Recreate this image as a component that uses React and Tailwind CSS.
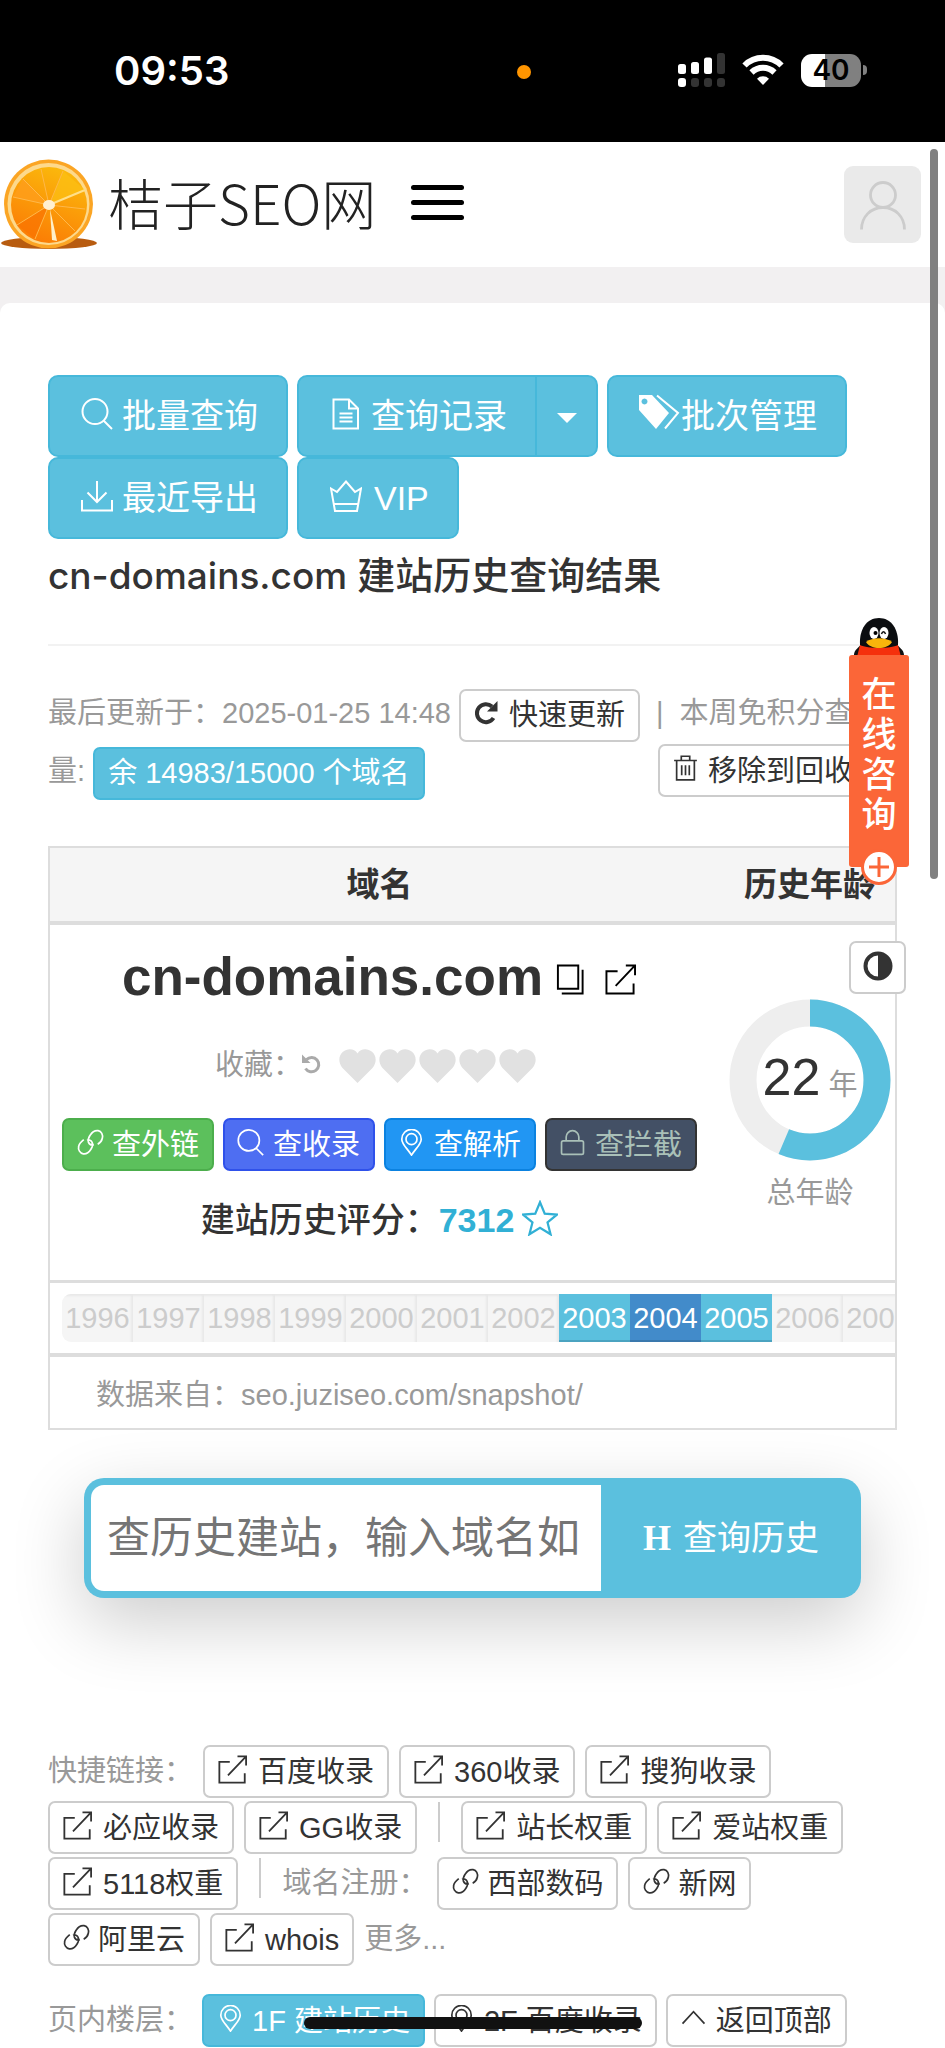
import { clsx } from 'clsx'

const years = Array.from({ length: 12 }, (_, i) => 1996 + i)

const quickLinks = [
  { label: '百度收录', icon: 'external' },
  { label: '360收录', icon: 'external' },
  { label: '搜狗收录', icon: 'external' },
  { label: '必应收录', icon: 'external' },
  { label: 'GG收录', icon: 'external' },
  { divider: true },
  { label: '站长权重', icon: 'external' },
  { label: '爱站权重', icon: 'external' },
  { label: '5118权重', icon: 'external' },
  { divider: true },
  { text: '域名注册：' },
  { label: '西部数码', icon: 'link' },
  { label: '新网', icon: 'link' },
  { label: '阿里云', icon: 'link' },
  { label: 'whois', icon: 'external' },
]

// thin line icons, all drawn on a 32px grid
const shapes = {
  search: <><circle cx="14" cy="13.500" r="12.500" /><path d="M22.500 22.500 31 31" /></>,
  doc: <><path d="M3.500 1.500H19l9 9V30.500H3.500z" /><path d="M19 1.500v9h9M9.500 15.500h13M9.500 19.500h13M9.500 23.500h13" /></>,
  download: <path d="M16 1v21M6.500 12.500 16 22l9.500-9.500M1 20v10.500h30V20" />,
  crown: <path d="M1 8.500 7 12l9-10.500L25 12l6-3.500L27 31H5zM4.500 24h23" />,
  external: <path d="M13 7.500H1.500V30.500h28V20M11 22.500 31 1.500M21.500 1.500H31v10" />,
  copy: <><path d="M3 1.500h21v24H3z" /><path d="M7 30.500h21.500V6" /></>,
  link: <path d="M12 13.500c2-1.500 5 0 6 2.500 1.200 3 .5 5-1.500 8-2.500 4-5 6-9 5.500-4-.8-6.500-5-5.500-9C2.500 17.500 5 15 8 12.500M20 18.500c-3 1-5.500-.5-6.500-3-.8-3 0-5 2-8 2.500-4 5.500-6 9.500-5.500 4 .8 6 5 5 9-.6 3-2.500 5.500-5.500 7" />,
  pin: <><path d="M16 31C11 23 4.500 18 4.500 12a11.500 11.500 0 0 1 23 0C27.500 18 21 23 16 31z" /><circle cx="16" cy="12" r="6.500" /></>,
  lock: <><rect x="3" y="14" width="26" height="16" rx="2" /><path d="M8.500 14V9.500a7.500 7.500 0 0 1 15 0V14" /></>,
  trash: <><path d="M2.500 6.500h27M11 6V1.500h10V6M5.500 6.500v23h21v-23" /><path d="M11.500 12v12M16 12v12M20.500 12v12" /></>,
  up: <path d="M3 22 16 8l13 14" />,
  star: <path d="m16 2 4.200 10.200L31 13l-8.300 7 2.700 10.500L16 24.800 6.600 30.500 9.300 20 1 13l10.800-.8z" />,
}

function Icon({ name, className, stroke = 2 }) {
  return (
    <svg viewBox="0 0 32 32" className={clsx('shrink-0', className)} fill="none" stroke="currentColor" strokeWidth={stroke} aria-hidden="true">
      {shapes[name]}
    </svg>
  )
}

const tones = {
  plain: 'bg-white border-[#ccc] text-[#333]',
  info: 'bg-[#5bc0de] border-[#46b8da] text-white',
  green: 'bg-[#5cc05c] border-[#4cae4c] text-white',
  indigo: 'bg-[#4e6ef2] border-[#2f51ea] text-white',
  blue: 'bg-[#2196f3] border-[#0b82e0] text-white',
  dark: 'bg-[#435065] border-[#333] text-[#a9c0b8]',
}

function SmallButton({ as: Tag = 'button', tone = 'plain', icon, children, className, ...rest }) {
  return (
    <Tag
      className={clsx('inline-flex items-center h-[53px] px-[13px] border-2 rounded-[7px] text-[29px] leading-[40px] whitespace-nowrap', tones[tone], className)}
      {...rest}
    >
      {icon && (
        <span className={clsx('flex mr-[9px] pb-1', icon === 'external' ? 'w-[31px] justify-start' : 'w-[26px] justify-center')}>
          <Icon name={icon} className={icon === 'external' ? 'w-[29px] h-[29px]' : 'w-[27px] h-[27px]'} />
        </span>
      )}
      {children}
    </Tag>
  )
}

function BigButton({ icon, children, className }) {
  return (
    <button className={clsx('inline-flex items-center h-[82px] px-[28px] border-2 border-[#46b8da] bg-[#5bc0de] text-white text-[34px] rounded-[10px] whitespace-nowrap', className)}>
      {icon && <Icon name={icon} className={clsx('w-[32px] h-[32px] ml-[3px] mb-1', icon === 'crown' ? 'mr-3' : 'mr-[9px]')} />}
      {children}
    </button>
  )
}

function StatusBar() {
  return (
    <div className="relative h-[142px] bg-black text-white flex justify-between items-start pl-[114px] pr-[78px]">
      <div className="font-['Inter',sans-serif] font-semibold text-[40px] leading-[52px] mt-[45px]">09:53</div>
      <span className="absolute left-[517px] top-[65px] w-[14px] h-[14px] rounded-full bg-[#ff9500]" />
      <div className="flex items-center mt-[53px] h-[34px]">
        <svg viewBox="0 0 48 34" className="w-[48px] h-[34px]" fill="#fff">
          <rect y="11" width="8" height="10" rx="2.500" />
          <rect x="13" y="9" width="8" height="12" rx="2.500" />
          <rect x="26" y="4.500" width="8" height="16.500" rx="2.500" />
          <rect x="39" y="0" width="8" height="21" rx="2.500" fill="#333" />
          <rect y="25" width="8" height="9" rx="3" />
          <rect x="13" y="25" width="8" height="9" rx="3" fill="#333" />
          <rect x="26" y="25" width="8" height="9" rx="3" fill="#333" />
          <rect x="39" y="25" width="8" height="9" rx="3" fill="#333" />
        </svg>
        <svg viewBox="0 0 42 32" className="w-[42px] h-[32px] ml-4" fill="none" stroke="#fff" strokeWidth="6">
          <path d="M2.500 11.500a26 26 0 0 1 37 0M9.500 18.500a16.500 16.500 0 0 1 23 0" />
          <path d="M21 31l-6-6.200a8.500 8.500 0 0 1 12 0z" fill="#fff" stroke="none" />
        </svg>
        <div className="flex items-center ml-[17px]">
          <div className="w-[60px] h-[33px] rounded-[11px] bg-linear-to-r from-white from-40% to-[#808080] to-40% text-black text-center font-['Inter',sans-serif] font-semibold text-[28px] leading-[33px]">40</div>
          <span className="ml-[2px] w-1 h-[10px] rounded-r-full bg-[#808080]" />
        </div>
      </div>
    </div>
  )
}

function OrangeLogo() {
  return (
    <svg viewBox="0 0 96 92" className="w-[96px] h-[92px]" aria-hidden="true">
      <defs>
        <linearGradient id="pulp" x1="0.700" y1="0" x2="0.300" y2="1">
          <stop offset="0" stopColor="#fbba0c" />
          <stop offset="1" stopColor="#fb7b05" />
        </linearGradient>
      </defs>
      <ellipse cx="48" cy="84" rx="48" ry="6" fill="#b85c10" />
      <circle cx="47.500" cy="45" r="44.500" fill="#fba524" />
      <circle cx="47.500" cy="45" r="41" fill="#fdd98c" />
      <circle cx="48" cy="46" r="38" fill="url(#pulp)" />
      <path d="M48 46 12 38 22 20z" fill="#ff9d1c" opacity="0.800" />
      <path d="M48 46 16 66 34 80z" fill="#f97402" opacity="0.700" />
      <path d="M48 46 62 12 84 31z" fill="#fcc014" opacity="0.700" />
      <g stroke="#ffb84a" strokeWidth="1">
        <path d="M48 46 40 10M48 46 22 20M48 46 12 38M48 46 16 66M48 46 34 80M48 46 74 72M48 46 84 50M48 46 62 12" />
        <path d="M48 46 84 31" stroke="#ffdf8a" strokeWidth="2" />
      </g>
      <path d="m49 50 7 32-5-1z" fill="#fff0c8" />
      <ellipse cx="48" cy="46" rx="6" ry="5" fill="#fff0d0" />
    </svg>
  )
}

function Header() {
  return (
    <header className="flex items-center h-[125px] bg-white pl-[1px] pr-6">
      <a href="#" className="flex items-center">
        <OrangeLogo />
        <span className="ml-[11px] mb-2 font-['Noto_Sans_CJK_SC',sans-serif] font-light text-[55px] leading-[70px] text-[#222] whitespace-nowrap">桔子SEO网</span>
      </a>
      <button aria-label="菜单" className="ml-[35px] mb-1 flex flex-col gap-[10px]">
        <span className="w-[53px] h-[5px] rounded-full bg-black" />
        <span className="w-[53px] h-[5px] rounded-full bg-black" />
        <span className="w-[53px] h-[5px] rounded-full bg-black" />
      </button>
      <button aria-label="用户" className="ml-auto w-[77px] h-[77px] rounded-[9px] bg-[#eaeaea] flex items-center justify-center">
        <svg viewBox="0 0 48 50" className="w-[48px] h-[50px]" fill="none" stroke="#ccc" strokeWidth="2.800">
          <circle cx="24" cy="15" r="12.500" />
          <path d="M2.500 49.500c0-13 9.500-22 21.500-22s21.500 9 21.500 22" />
        </svg>
      </button>
    </header>
  )
}

function AgeRing() {
  const length = 2 * Math.PI * 67
  return (
    <div className="relative w-[162px] h-[162px] mx-auto">
      <svg viewBox="0 0 162 162" className="w-full h-full -rotate-90" fill="none" strokeWidth="27">
        <circle cx="81" cy="81" r="67" stroke="#eee" />
        <circle cx="81" cy="81" r="67" stroke="#5bc0de" strokeDasharray={`${length * 0.563} ${length}`} />
      </svg>
      <div className="absolute inset-0 flex items-baseline justify-center pt-[46px] whitespace-nowrap">
        <span className="text-[52px] leading-[64px] text-[#333]">22</span>
        <span className="text-[29px] text-[#999] ml-2">年</span>
      </div>
    </div>
  )
}

function ResultTable() {
  return (
    <div className="mt-[46px] border-2 border-[#ddd] overflow-hidden">
      <table className="table-fixed w-[861px] border-separate border-spacing-0 text-[#333]">
        <thead>
          <tr className="bg-[#f5f5f5]">
            <th className="w-[659px] h-[77px] border-b-4 border-[#ddd] text-[33px] font-bold">域名</th>
            <th className="border-b-4 border-[#ddd] text-[33px] font-bold">历史年龄</th>
          </tr>
        </thead>
        <tbody>
          <tr>
            <td className="h-[358px] border-b-[3px] border-[#ddd] align-top px-3 pt-5">
              <div className="flex items-baseline justify-center">
                <strong className="text-[53px] leading-[64px]">cn-domains.com</strong>
                <button aria-label="复制" className="ml-3 text-black"><Icon name="copy" className="w-[31px] h-[31px]" /></button>
                <a href="#" aria-label="打开" className="ml-[18px] text-black"><Icon name="external" className="w-[33px] h-[31px]" /></a>
              </div>
              <div className="mt-[37px] pr-2 flex items-center justify-center h-10 text-[29px] text-[#999]">
                收藏：
                <svg viewBox="0 0 20 20" className="w-[20px] h-[20px] mb-1" fill="none" stroke="#aaa" strokeWidth="3">
                  <path d="M4.500 5.500A7.200 7.200 0 1 1 3.500 14.500" />
                  <path d="M0 .5v8.500h8.500z" fill="#aaa" stroke="none" />
                </svg>
                <div className="flex ml-[17px] gap-[3px]">
                  {[1, 2, 3, 4, 5].map((n) => (
                    <button key={n} aria-label={`收藏 ${n}`}>
                      <svg viewBox="0 0 37 34" className="w-[37px] h-[34px]" fill="#e1e1e1">
                        <path d="M18.500 34 3.500 19C-1.500 13 0 6 4 2.800 8.500-1 15.500-.5 18.500 4.500 21.500-.5 28.500-1 33 2.800c4 3.200 5.500 10.200.5 16.200z" />
                      </svg>
                    </button>
                  ))}
                </div>
              </div>
              <div className="mt-8 flex justify-between">
                <SmallButton tone="green" icon="link">查外链</SmallButton>
                <SmallButton tone="indigo" icon="search">查收录</SmallButton>
                <SmallButton tone="blue" icon="pin">查解析</SmallButton>
                <SmallButton tone="dark" icon="lock">查拦截</SmallButton>
              </div>
              <div className="mt-6 flex items-center justify-center text-[34px] leading-[50px] font-medium">
                建站历史评分：
                <span className="text-[#31b0d5] font-bold">7312</span>
                <Icon name="star" stroke={2} className="w-[36px] h-[36px] ml-2 mb-1 text-[#31b0d5]" />
              </div>
            </td>
            <td className="border-b-[3px] border-[#ddd] align-top pt-[74px] text-center">
              <AgeRing />
              <div className="mt-3 text-[29px] leading-[40px] text-[#999]">总年龄</div>
            </td>
          </tr>
          <tr>
            <td colSpan={2} className="h-[74px] border-b-4 border-[#ddd] pl-3">
              <div className="flex h-12 rounded-l-[9px] bg-[#f5f5f5] text-[29px] leading-[48px] text-[#ccc] overflow-hidden">
                {years.map((year) => (
                  <span
                    key={year}
                    className={clsx(
                      'w-[71px] shrink-0 text-center',
                      year === 2004 && 'bg-[#428bca] text-white shadow-[inset_0_-2px_0_#3a78ad]',
                      (year === 2003 || year === 2005) && 'bg-[#5bc0de] text-white shadow-[inset_0_-2px_0_#4ba3c0]',
                      (year < 2003 || year > 2005) && 'shadow-[inset_-2px_2px_2px_#e8e8e8]'
                    )}
                  >
                    {year}
                  </span>
                ))}
              </div>
            </td>
          </tr>
          <tr>
            <td colSpan={2} className="h-[71px] pl-[46px] pt-1 text-[29px] leading-[40px] text-[#999]">数据来自：seo.juziseo.com/snapshot/</td>
          </tr>
        </tbody>
      </table>
    </div>
  )
}

function SearchForm() {
  return (
    <form className="mt-12 mx-9 h-[120px] flex p-[7px] pr-0 rounded-[20px] bg-[#5bc0de] shadow-[0_24px_72px_rgba(0,0,0,0.2)]">
      <input
        type="text"
        aria-label="域名"
        placeholder="查历史建站，输入域名如"
        className="flex-1 min-w-0 bg-white rounded-l-[13px] pl-4 text-[43px] placeholder:text-[#757575] outline-none"
      />
      <button type="button" className="w-[260px] flex items-center justify-center text-white text-[34px] whitespace-nowrap">
        <b className="font-['Liberation_Serif',serif] text-[36px] mr-3">H</b>
        查询历史
      </button>
    </form>
  )
}

function QuickLinks() {
  return (
    <nav className="mt-[147px] flex flex-wrap items-center gap-x-[10px] gap-y-[3px] text-[29px] text-[#999]">
      <span>快捷链接：</span>
      {quickLinks.map((item, i) => {
        if (item.divider) return <span key={i} className="w-[2px] h-10 mx-[11px] mb-3 bg-[#ccc]" />
        if (item.text) return <span key={i}>{item.text}</span>
        return <SmallButton key={i} as="a" href="#" icon={item.icon}>{item.label}</SmallButton>
      })}
      <span>更多...</span>
    </nav>
  )
}

function ChatWidget() {
  return (
    <a href="#" className="absolute left-[849px] top-[617px] w-[60px] flex flex-col items-center">
      <svg viewBox="0 0 60 40" className="w-[60px] h-[40px]" aria-hidden="true">
        <path d="M5 38c0-5 5-8 9-12h32c4 4 9 7 9 12z" fill="#111" />
        <path d="M11 28h38l3 12H8z" fill="#f5300c" />
        <path d="M11 28C10 12 18 1 30 1s20 11 19 27c-8 4-30 4-38 0z" fill="#0b0d10" />
        <ellipse cx="25" cy="16" rx="4.500" ry="6" fill="#fff" />
        <ellipse cx="35" cy="16" rx="4.500" ry="6" fill="#fff" />
        <circle cx="26.500" cy="16" r="2" />
        <path d="M32.500 17c1-3 3-3 4 0" stroke="#111" strokeWidth="1.500" fill="none" />
        <path d="M17 25c6-5 20-5 26 0-5 8-21 8-26 0z" fill="#f9b50b" />
      </svg>
      <span className="w-[60px] h-[212px] -mt-[2px] rounded-[3px] bg-[#fb6638] text-white text-[35px] leading-[40px] pt-5 flex flex-col items-center font-medium">
        <span>在</span>
        <span>线</span>
        <span>咨</span>
        <span>询</span>
      </span>
      <svg viewBox="0 0 38 38" className="w-[38px] h-[38px] -mt-[19px]" aria-hidden="true">
        <circle cx="19" cy="19" r="16.500" fill="#fff" stroke="#fb6638" strokeWidth="3" />
        <path d="M19 9v20M9 19h20" stroke="#fb6638" strokeWidth="3" />
      </svg>
    </a>
  )
}

export default function App() {
  return (
    <div className="relative min-h-screen overflow-hidden bg-white font-['Liberation_Sans','Noto_Sans_CJK_SC',sans-serif]">
      <StatusBar />
      <Header />
      <div className="bg-[#f2f0f1] pt-9">
        <main className="bg-white rounded-t-[10px] px-12 pt-[72px]">
          {/* Toolbar */}
          <div className="flex flex-wrap gap-x-[9px]">
            <BigButton icon="search">批量查询</BigButton>
            <div className="flex">
              <BigButton icon="doc" className="rounded-r-none">查询记录</BigButton>
              <button aria-label="更多记录" className="-ml-[2px] w-[63px] flex items-center justify-center border-2 border-[#46b8da] bg-[#5bc0de] rounded-r-[10px]">
                <svg viewBox="0 0 20 10" className="w-[20px] h-[10px] mt-1" fill="#fff"><path d="M0 0h20L10 10z" /></svg>
              </button>
            </div>
            <BigButton>
              <svg viewBox="0 0 44 36" className="w-[44px] h-[36px] mb-2" fill="#fff" aria-hidden="true">
                <path d="M2 1h13l17 18-13 16L2 16zM7.500 4.500a3 3 0 1 0 .01 0z" fillRule="evenodd" />
                <path d="M20 1.500 41 19 28 34.500" fill="none" stroke="#fff" strokeWidth="2" />
              </svg>
              批次管理
            </BigButton>
            <BigButton icon="download">最近导出</BigButton>
            <BigButton icon="crown">VIP</BigButton>
          </div>

          <h1 className="mt-[16px] text-[38px] leading-[40px] font-medium text-[#333] font-['Inter','Noto_Sans_CJK_SC',sans-serif]">
            <span className="text-[37px]">cn-domains.com</span> 建站历史查询结果
          </h1>
          <hr className="mt-[48px] border-t-2 border-[#f2f2f2]" />

          <div className="mt-[38px] text-[29px] leading-[58px] text-[#999]">
            最后更新于：2025-01-25 14:48{' '}
            <SmallButton className="align-middle">
              <svg viewBox="0 0 24 24" className="w-[24px] h-[24px] mr-[11px] mb-1" fill="none" stroke="#333" strokeWidth="4" aria-hidden="true">
                <path d="M19.500 17A9 9 0 1 1 18 5.500" />
                <path d="M23.500 0v10.500H13z" fill="#333" stroke="none" />
              </svg>
              快速更新
            </SmallButton>
            <span className="mx-4">|</span>
            本周免积分查询量:{' '}
            <SmallButton tone="info" className="align-middle">余 14983/15000 个域名</SmallButton>
            <SmallButton icon="trash" className="float-right mt-[2px]">移除到回收站</SmallButton>
          </div>

          <ResultTable />
          <SearchForm />
          <QuickLinks />

          {/* Page floors */}
          <nav className="mt-7 flex flex-wrap items-center gap-x-[9px] text-[29px] text-[#999]">
            <span>页内楼层：</span>
            <SmallButton as="a" href="#" tone="info" icon="pin">1F 建站历史</SmallButton>
            <SmallButton as="a" href="#" icon="pin">2F 百度收录</SmallButton>
            <SmallButton as="a" href="#" icon="up">返回顶部</SmallButton>
          </nav>
        </main>
      </div>

      <ChatWidget />
      <button aria-label="切换主题" className="absolute left-[849px] top-[941px] w-[57px] h-[53px] flex items-center justify-center bg-white border-2 border-[#ccc] rounded-[7px]">
        <svg viewBox="0 0 30 30" className="w-[30px] h-[30px] mb-1">
          <circle cx="15" cy="15" r="12.500" fill="#fff" stroke="#333" strokeWidth="4" />
          <path d="M15 2a13 13 0 0 1 0 26z" fill="#333" />
        </svg>
      </button>
      <div className="absolute right-[7px] top-[149px] w-2 h-[730px] rounded-full bg-[#808080]" />
      <div className="fixed bottom-[19px] left-1/2 -translate-x-1/2 w-[338px] h-3 rounded-full bg-[#111]" />
    </div>
  )
}
